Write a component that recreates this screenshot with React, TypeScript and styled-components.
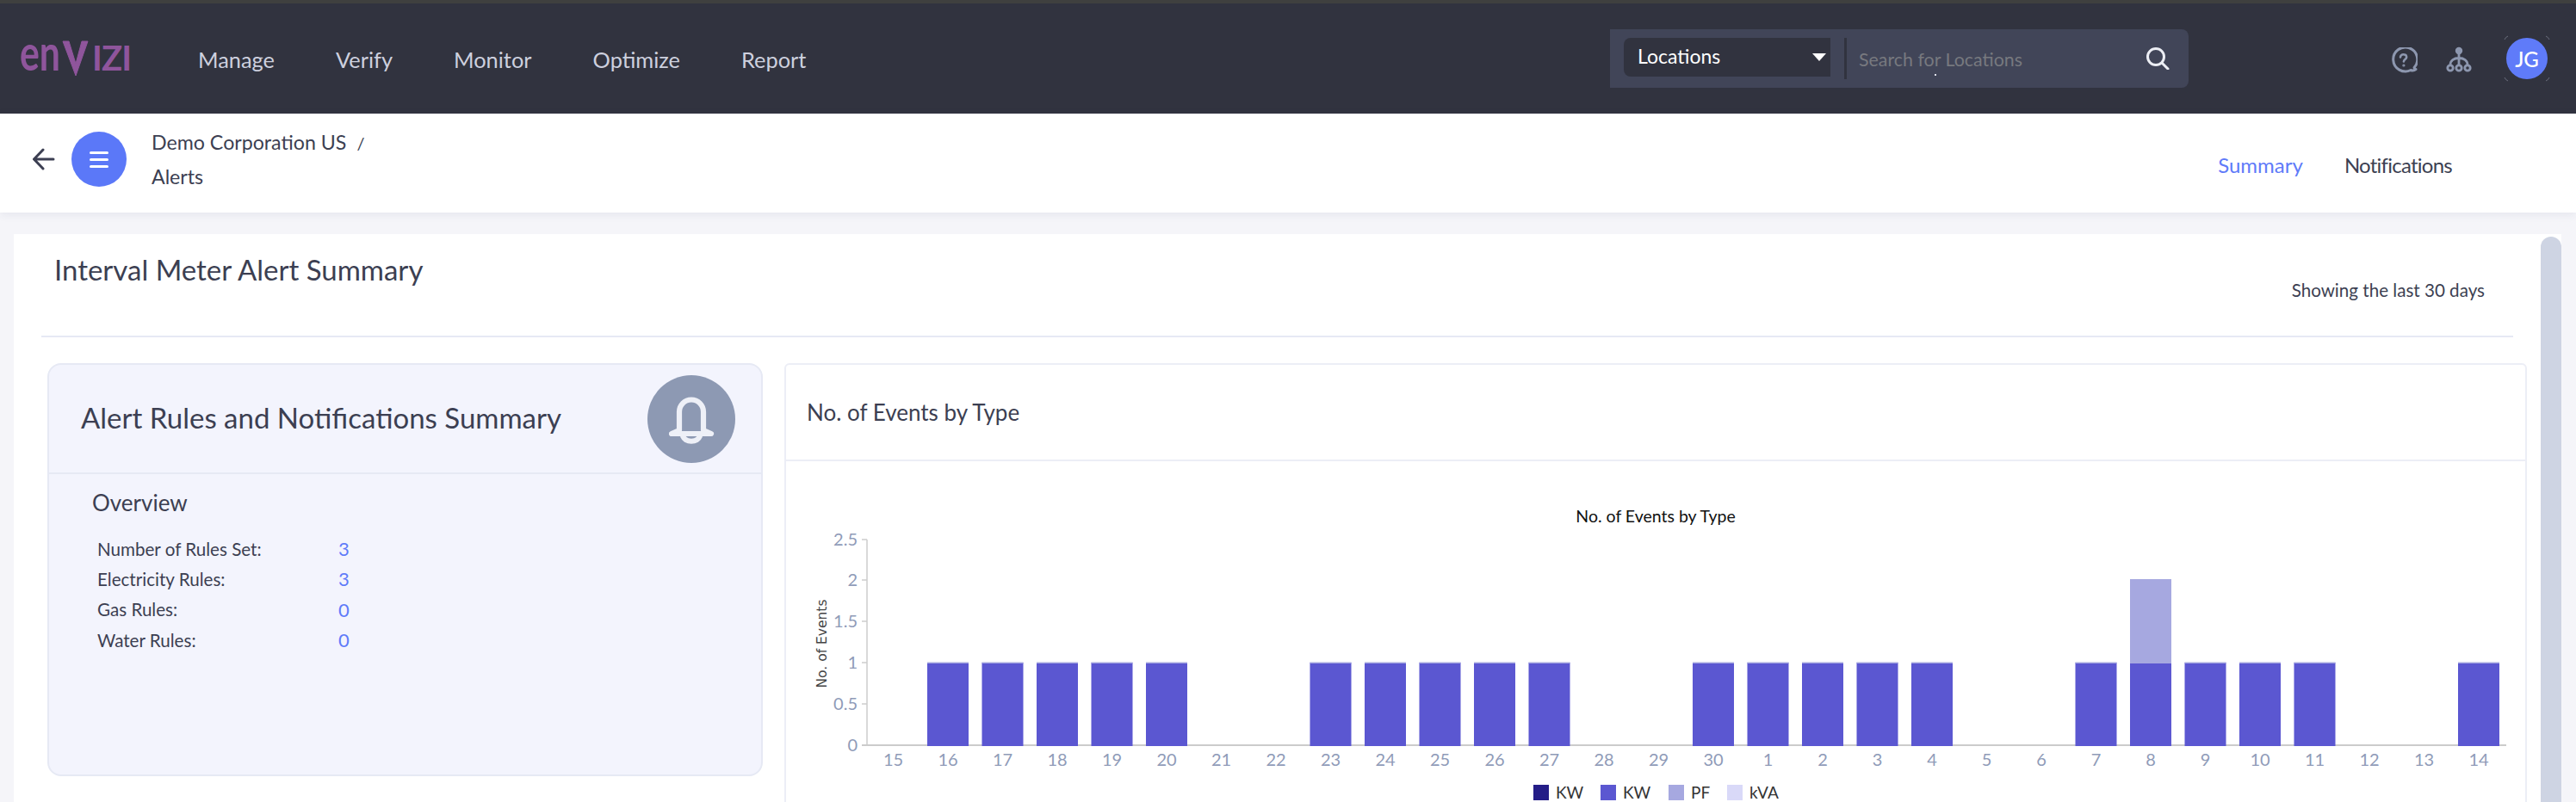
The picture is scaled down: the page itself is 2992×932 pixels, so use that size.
import React from "react";
import styled, { createGlobalStyle } from "styled-components";

const Global = createGlobalStyle`
  html, body { margin: 0; padding: 0; height: 100%; background: #f5f5f9; overflow: hidden; }
  body { font-family: "Lato", "Noto Sans", sans-serif; color: #3c3f52; }
  * { box-sizing: border-box; }
`;

const Page = styled.div`
  width: 2992px;
  height: 932px;
  display: flex;
  flex-direction: column;
  overflow: hidden;
`;

const TopBar = styled.header`
  height: 132px;
  flex: none;
  display: flex;
  align-items: center;
  background: #31333f;
  border-top: 4px solid #3f403f;
  padding: 0 33px 0 23px;
`;

const LogoSvg = styled.svg`
  width: 130px;
  height: 84px;
  flex: none;
  display: block;
`;

const MainNav = styled.nav`
  display: flex;
  gap: 71px;
  margin-left: 77px;
`;

const NavLink = styled.a`
  font-size: 25.4px;
  line-height: 36px;
  color: #cdd0de;
  margin-top: 2px;
`;

const SearchBar = styled.div`
  position: relative;
  margin-left: auto;
  width: 672px;
  height: 68px;
  display: flex;
  align-items: flex-start;
  background: #414558;
  border-radius: 0 8px 8px 0;
  padding: 10px 22px 0 16px;
`;

const LocationSelect = styled.div`
  width: 240px;
  height: 45px;
  display: flex;
  align-items: center;
  justify-content: space-between;
  background: #31333f;
  border-radius: 8px 0 0 8px;
  padding: 0 5px 3px 16px;
  color: #fff;
  font-size: 23px;
`;

const Caret = styled.span`
  width: 0;
  height: 0;
  margin-top: 3px;
  border-left: 8px solid transparent;
  border-right: 8px solid transparent;
  border-top: 9px solid #fff;
`;

const SearchDivider = styled.span`
  width: 3px;
  height: 48px;
  margin-left: 16px;
  background: #31333f;
  flex: none;
`;

const Placeholder = styled.span`
  margin-left: 14px;
  flex: 1;
  font-size: 21.4px;
  line-height: 50px;
  color: #77797f;
`;

const Speck = styled.span`
  position: absolute;
  left: 377px;
  top: 52px;
  width: 2px;
  height: 2px;
  background: #dfe1ea;
`;

const SearchGlyph = styled.svg`
  width: 28px;
  height: 26px;
  margin-top: 11px;
  flex: none;
`;

const IconGroup = styled.div`
  display: flex;
  align-items: center;
  margin-left: 234px;
`;

const HelpGlyph = styled.svg`
  width: 32px;
  height: 30px;
  margin-top: 3px;
  display: block;
`;

const TreeGlyph = styled.svg`
  width: 30px;
  height: 30px;
  margin-left: 33px;
  margin-top: 1px;
  display: block;
`;

const Avatar = styled.div`
  position: relative;
  width: 48px;
  height: 48px;
  margin-left: 40px;
  border-radius: 50%;
  background: #5f7bf9;
  color: #fff;
  font-size: 24px;
  font-weight: 500;
  display: flex;
  align-items: center;
  justify-content: center;
`;

const AvatarCorners = styled.svg`
  position: absolute;
  left: -3px;
  top: -3px;
  width: 54px;
  height: 54px;
`;

const SubHeader = styled.section`
  height: 115px;
  flex: none;
  display: flex;
  align-items: flex-start;
  background: #fff;
  padding: 0 144px 0 38px;
  box-shadow: 0 2px 10px rgba(60, 63, 110, 0.09);
  position: relative;
  z-index: 1;
`;

const BackGlyph = styled.svg`
  width: 26px;
  height: 26px;
  margin-top: 40px;
  flex: none;
`;

const MenuCircle = styled.div`
  width: 64px;
  height: 64px;
  margin: 21px 0 0 19px;
  border-radius: 50%;
  background: #5b78f8;
  display: flex;
  flex-direction: column;
  align-items: center;
  justify-content: center;
  gap: 5px;
  flex: none;
`;

const MenuLine = styled.span`
  width: 22px;
  height: 3px;
  border-radius: 2px;
  background: #fff;
`;

const Crumbs = styled.div`
  margin: 14px 0 0 29px;
  font-size: 23.2px;
  line-height: 38.5px;
  color: #3c3f52;
`;

const CrumbSlash = styled.span`
  margin-left: 12px;
  font-size: 20px;
`;

const Tabs = styled.div`
  margin: 40px 0 0 auto;
  display: flex;
  gap: 48px;
`;

const Tab = styled.a<{ $active?: boolean; $tight?: boolean }>`
  font-size: 24px;
  line-height: 40px;
  letter-spacing: ${(p) => (p.$tight ? "-0.75px" : "0")};
  color: ${(p) => (p.$active ? "#5f7bf9" : "#3c3f52")};
`;

const Panel = styled.main`
  flex: none;
  width: 2959px;
  height: 660px;
  margin: 25px 0 0 16px;
  background: #fff;
  display: flex;
  overflow: hidden;
`;

const PanelContent = styled.div`
  flex: 1;
  min-width: 0;
`;

const TitleRow = styled.div`
  height: 118px;
  display: flex;
  align-items: flex-start;
  justify-content: space-between;
  padding: 18px 65px 0 47px;
`;

const PageTitle = styled.h1`
  margin: 0;
  font-size: 33px;
  line-height: 46px;
  font-weight: 400;
  color: #3c3f52;
`;

const RangeNote = styled.span`
  margin-top: 34px;
  font-size: 20.6px;
  line-height: 26px;
  color: #3c3f52;
`;

const Rule = styled.hr`
  margin: 0 32px;
  border: 0;
  height: 2px;
  background: #e6e9f4;
`;

const Cards = styled.div`
  display: flex;
  align-items: flex-start;
  gap: 25px;
  margin-top: 30px;
  padding: 0 16px 0 39px;
`;

const SummaryCard = styled.section`
  width: 831px;
  height: 480px;
  flex: none;
  background: #f3f4fd;
  border: 2px solid #e6e9f4;
  border-radius: 16px;
`;

const SummaryHead = styled.div`
  height: 127px;
  display: flex;
  align-items: center;
  justify-content: space-between;
  padding: 0 30px 0 37px;
  border-bottom: 2px solid #e6e9f4;
`;

const SummaryTitle = styled.h2`
  margin: 0 0 3px;
  font-size: 33px;
  font-weight: 400;
  color: #3c3f52;
`;

const BellCircle = styled.div`
  width: 102px;
  height: 102px;
  border-radius: 50%;
  background: #8d99b3;
  display: flex;
  align-items: center;
  justify-content: center;
`;

const BellGlyph = styled.svg`
  width: 54px;
  height: 58px;
  margin-top: 4px;
`;

const Overview = styled.div`
  padding: 15px 0 0 50px;
`;

const OverviewTitle = styled.h3`
  margin: 0 0 18px;
  font-size: 26px;
  line-height: 36px;
  font-weight: 400;
  color: #3c3f52;
`;

const StatRow = styled.div`
  display: grid;
  grid-template-columns: 280px auto;
  height: 35.3px;
  align-items: center;
  padding-left: 6px;
  font-size: 20.6px;
  color: #3c3f52;
`;

const StatValue = styled.span`
  color: #5f7bf9;
  font-size: 22px;
`;

const EventsCard = styled.section`
  flex: 1;
  min-width: 0;
  height: 560px;
  background: #fff;
  border: 2px solid #eceef6;
  border-radius: 6px 6px 0 0;
`;

const EventsHead = styled.div`
  height: 112px;
  display: flex;
  align-items: center;
  padding-left: 24px;
  border-bottom: 2px solid #eceef6;
`;

const EventsTitle = styled.h2`
  margin: 0;
  font-size: 26px;
  font-weight: 400;
  color: #3c3f52;
`;

const ChartSvg = styled.svg`
  display: block;
  width: 2020px;
  height: 420px;
`;

const AxisLabel = styled.text`
  font-family: "Lato", sans-serif;
  font-size: 20px;
  fill: #8f9bb8;
`;

const ChartTitle = styled.text`
  font-family: "Lato", sans-serif;
  font-size: 19.5px;
  fill: #111;
`;

const YTitle = styled.text`
  font-family: "DejaVu Sans", sans-serif;
  font-size: 15.5px;
  fill: #444;
`;

const LegendText = styled.text`
  font-family: "Lato", sans-serif;
  font-size: 19px;
  fill: #333;
`;

const ScrollThumb = styled.div`
  width: 24px;
  flex: none;
  margin-top: 3px;
  background: #ced4e3;
  border-radius: 12px 12px 0 0;
`;

const days = [15,16,17,18,19,20,21,22,23,24,25,26,27,28,29,30,1,2,3,4,5,6,7,8,9,10,11,12,13,14];
const filled = new Set([1,2,3,4,5,8,9,10,11,12,15,16,17,18,19,22,23,24,25,26,29]);
const yTicks: [string, number][] = [["2.5",627],["2",674],["1.5",722],["1",770],["0.5",818],["0",866]];
const legend: [string, string, number][] = [
  ["KW", "#241d87", 1781],
  ["KW", "#5b57d1", 1859],
  ["PF", "#a6a8e0", 1938],
  ["kVA", "#d9d9f8", 2006],
];
const center = (i: number) => 1037.5 + 63.5 * i;

const Chart = () => (
  <ChartSvg viewBox="913 536 2020 420">
    <ChartTitle x={1923} y={607} textAnchor="middle">No. of Events by Type</ChartTitle>
    <YTitle transform="translate(960 748) rotate(-90)" textAnchor="middle">No. of Events</YTitle>
    <line x1={1007} y1={627} x2={1007} y2={866} stroke="#ccc" strokeWidth={1.5} />
    {yTicks.map(([label, y]) => (
      <g key={label}>
        <line x1={1001} y1={y} x2={1007} y2={y} stroke="#ccc" strokeWidth={1.5} />
        <AxisLabel x={996} y={y + 7} textAnchor="end">{label}</AxisLabel>
      </g>
    ))}
    {days.map((d, i) => (
      <AxisLabel key={i} x={center(i)} y={890} textAnchor="middle">{d}</AxisLabel>
    ))}
    {days.map((_, i) =>
      filled.has(i) ? (
        <g key={i}>
          <rect x={center(i) - 24} y={770} width={48} height={96} fill="#5b57d1" />
          <rect x={center(i) - 24} y={769.5} width={48} height={1.5} fill="#a6a8e0" />
        </g>
      ) : null
    )}
    <rect x={center(23) - 24} y={673} width={48} height={98} fill="#a6a8e0" />
    <rect x={center(23) - 24} y={771} width={48} height={95} fill="#5b57d1" />
    <line x1={1001} y1={866} x2={2911} y2={866} stroke="#ccc" strokeWidth={2} />
    {days.map((_, i) =>
      filled.has(i) ? <rect key={i} x={center(i) - 24} y={865} width={48} height={2} fill="#5b57d1" /> : null
    )}
    {legend.map(([label, color, x]) => (
      <g key={x}>
        <rect x={x} y={912} width={18} height={18} fill={color} />
        <LegendText x={x + 26} y={928}>{label}</LegendText>
      </g>
    ))}
  </ChartSvg>
);

const stats: [string, number][] = [
  ["Number of Rules Set:", 3],
  ["Electricity Rules:", 3],
  ["Gas Rules:", 0],
  ["Water Rules:", 0],
];

export default function App() {
  return (
    <Page>
      <Global />
      <TopBar>
        <LogoSvg viewBox="0 -21 130 84" role="img" aria-label="enVIZI">
          <text x="0" y="35" textLength="47" lengthAdjust="spacingAndGlyphs" fontFamily="Lato, sans-serif" fontSize="57" fontWeight="700" fill="#8f559c">en</text>
          <polygon points="50,1 57,1 65,27 72,1 79,1 65,41" fill="#8f559c" stroke="#8f559c" strokeWidth="1" strokeLinejoin="round" />
          <text x="84" y="35" textLength="46" lengthAdjust="spacing" fontFamily="Lato, sans-serif" fontSize="40" fontWeight="700" fill="#8f559c">IZI</text>
        </LogoSvg>
        <MainNav>
          <NavLink>Manage</NavLink>
          <NavLink>Verify</NavLink>
          <NavLink>Monitor</NavLink>
          <NavLink>Optimize</NavLink>
          <NavLink>Report</NavLink>
        </MainNav>
        <SearchBar>
          <LocationSelect>Locations<Caret /></LocationSelect>
          <SearchDivider />
          <Placeholder>Search for Locations</Placeholder>
          <Speck />
          <SearchGlyph viewBox="0 0 28 26" fill="none" stroke="#eceef4" strokeWidth="3" strokeLinecap="round">
            <circle cx="12" cy="11" r="9.5" />
            <path d="M19 18l7 7" />
          </SearchGlyph>
        </SearchBar>
        <IconGroup>
          <HelpGlyph viewBox="0 0 32 30" fill="none" stroke="#8d97af" strokeWidth="3" strokeLinecap="round" strokeLinejoin="round">
            <path d="M24 26.5A14 14 0 1 1 28 23.5c.3 1 1 1.7 2 2-2 1.6-4.5 1.6-6 1z" />
            <path d="M12 11.5c0-2 1.6-3.3 3.6-3.3s3.6 1.2 3.6 3.1c0 2.6-3.3 2.8-3.3 5.2" strokeWidth="2.6" />
            <circle cx="15.9" cy="21" r="0.6" strokeWidth="2" />
          </HelpGlyph>
          <TreeGlyph viewBox="0 0 30 30" fill="none" stroke="#8d97af" strokeWidth="2.8">
            <circle cx="15" cy="5" r="4.2" fill="#8d97af" stroke="none" />
            <path d="M15 8v14M5 21.5c0-5 4-8 10-8s10 3 10 8" />
            <circle cx="5" cy="25" r="3.2" />
            <circle cx="15" cy="25" r="3.2" />
            <circle cx="25" cy="25" r="3.2" />
          </TreeGlyph>
          <Avatar>
            JG
            <AvatarCorners viewBox="0 0 54 54" fill="none" stroke="#6a6d7c" strokeWidth="1">
              <path d="M1 5A7 7 0 0 1 5 1M49 1A7 7 0 0 1 53 5M53 49A7 7 0 0 1 49 53M5 53A7 7 0 0 1 1 49" />
            </AvatarCorners>
          </Avatar>
        </IconGroup>
      </TopBar>

      <SubHeader>
        <BackGlyph viewBox="0 0 26 26" fill="none" stroke="#3c3f52" strokeWidth="3" strokeLinecap="round" strokeLinejoin="round">
          <path d="M24 13H2M12 2L1.5 13 12 24" />
        </BackGlyph>
        <MenuCircle>
          <MenuLine />
          <MenuLine />
          <MenuLine />
        </MenuCircle>
        <Crumbs>
          <div>Demo Corporation US<CrumbSlash>/</CrumbSlash></div>
          <div>Alerts</div>
        </Crumbs>
        <Tabs>
          <Tab $active>Summary</Tab>
          <Tab $tight>Notifications</Tab>
        </Tabs>
      </SubHeader>

      <Panel>
        <PanelContent>
          <TitleRow>
            <PageTitle>Interval Meter Alert Summary</PageTitle>
            <RangeNote>Showing the last 30 days</RangeNote>
          </TitleRow>
          <Rule />
          <Cards>
            <SummaryCard>
              <SummaryHead>
                <SummaryTitle>Alert Rules and Notifications Summary</SummaryTitle>
                <BellCircle>
                  <BellGlyph viewBox="0 0 54 58" fill="none" stroke="#eef0f7" strokeWidth="6.2" strokeLinecap="round" strokeLinejoin="round">
                    <path d="M13 40V18.5a14 14 0 0 1 28 0V40l9 4H4z" />
                    <path d="M17 46c2 9 18 9 20 0" />
                  </BellGlyph>
                </BellCircle>
              </SummaryHead>
              <Overview>
                <OverviewTitle>Overview</OverviewTitle>
                {stats.map(([label, value]) => (
                  <StatRow key={label}>
                    <span>{label}</span>
                    <StatValue>{value}</StatValue>
                  </StatRow>
                ))}
              </Overview>
            </SummaryCard>
            <EventsCard>
              <EventsHead>
                <EventsTitle>No. of Events by Type</EventsTitle>
              </EventsHead>
              <Chart />
            </EventsCard>
          </Cards>
        </PanelContent>
        <ScrollThumb />
      </Panel>
    </Page>
  );
}
